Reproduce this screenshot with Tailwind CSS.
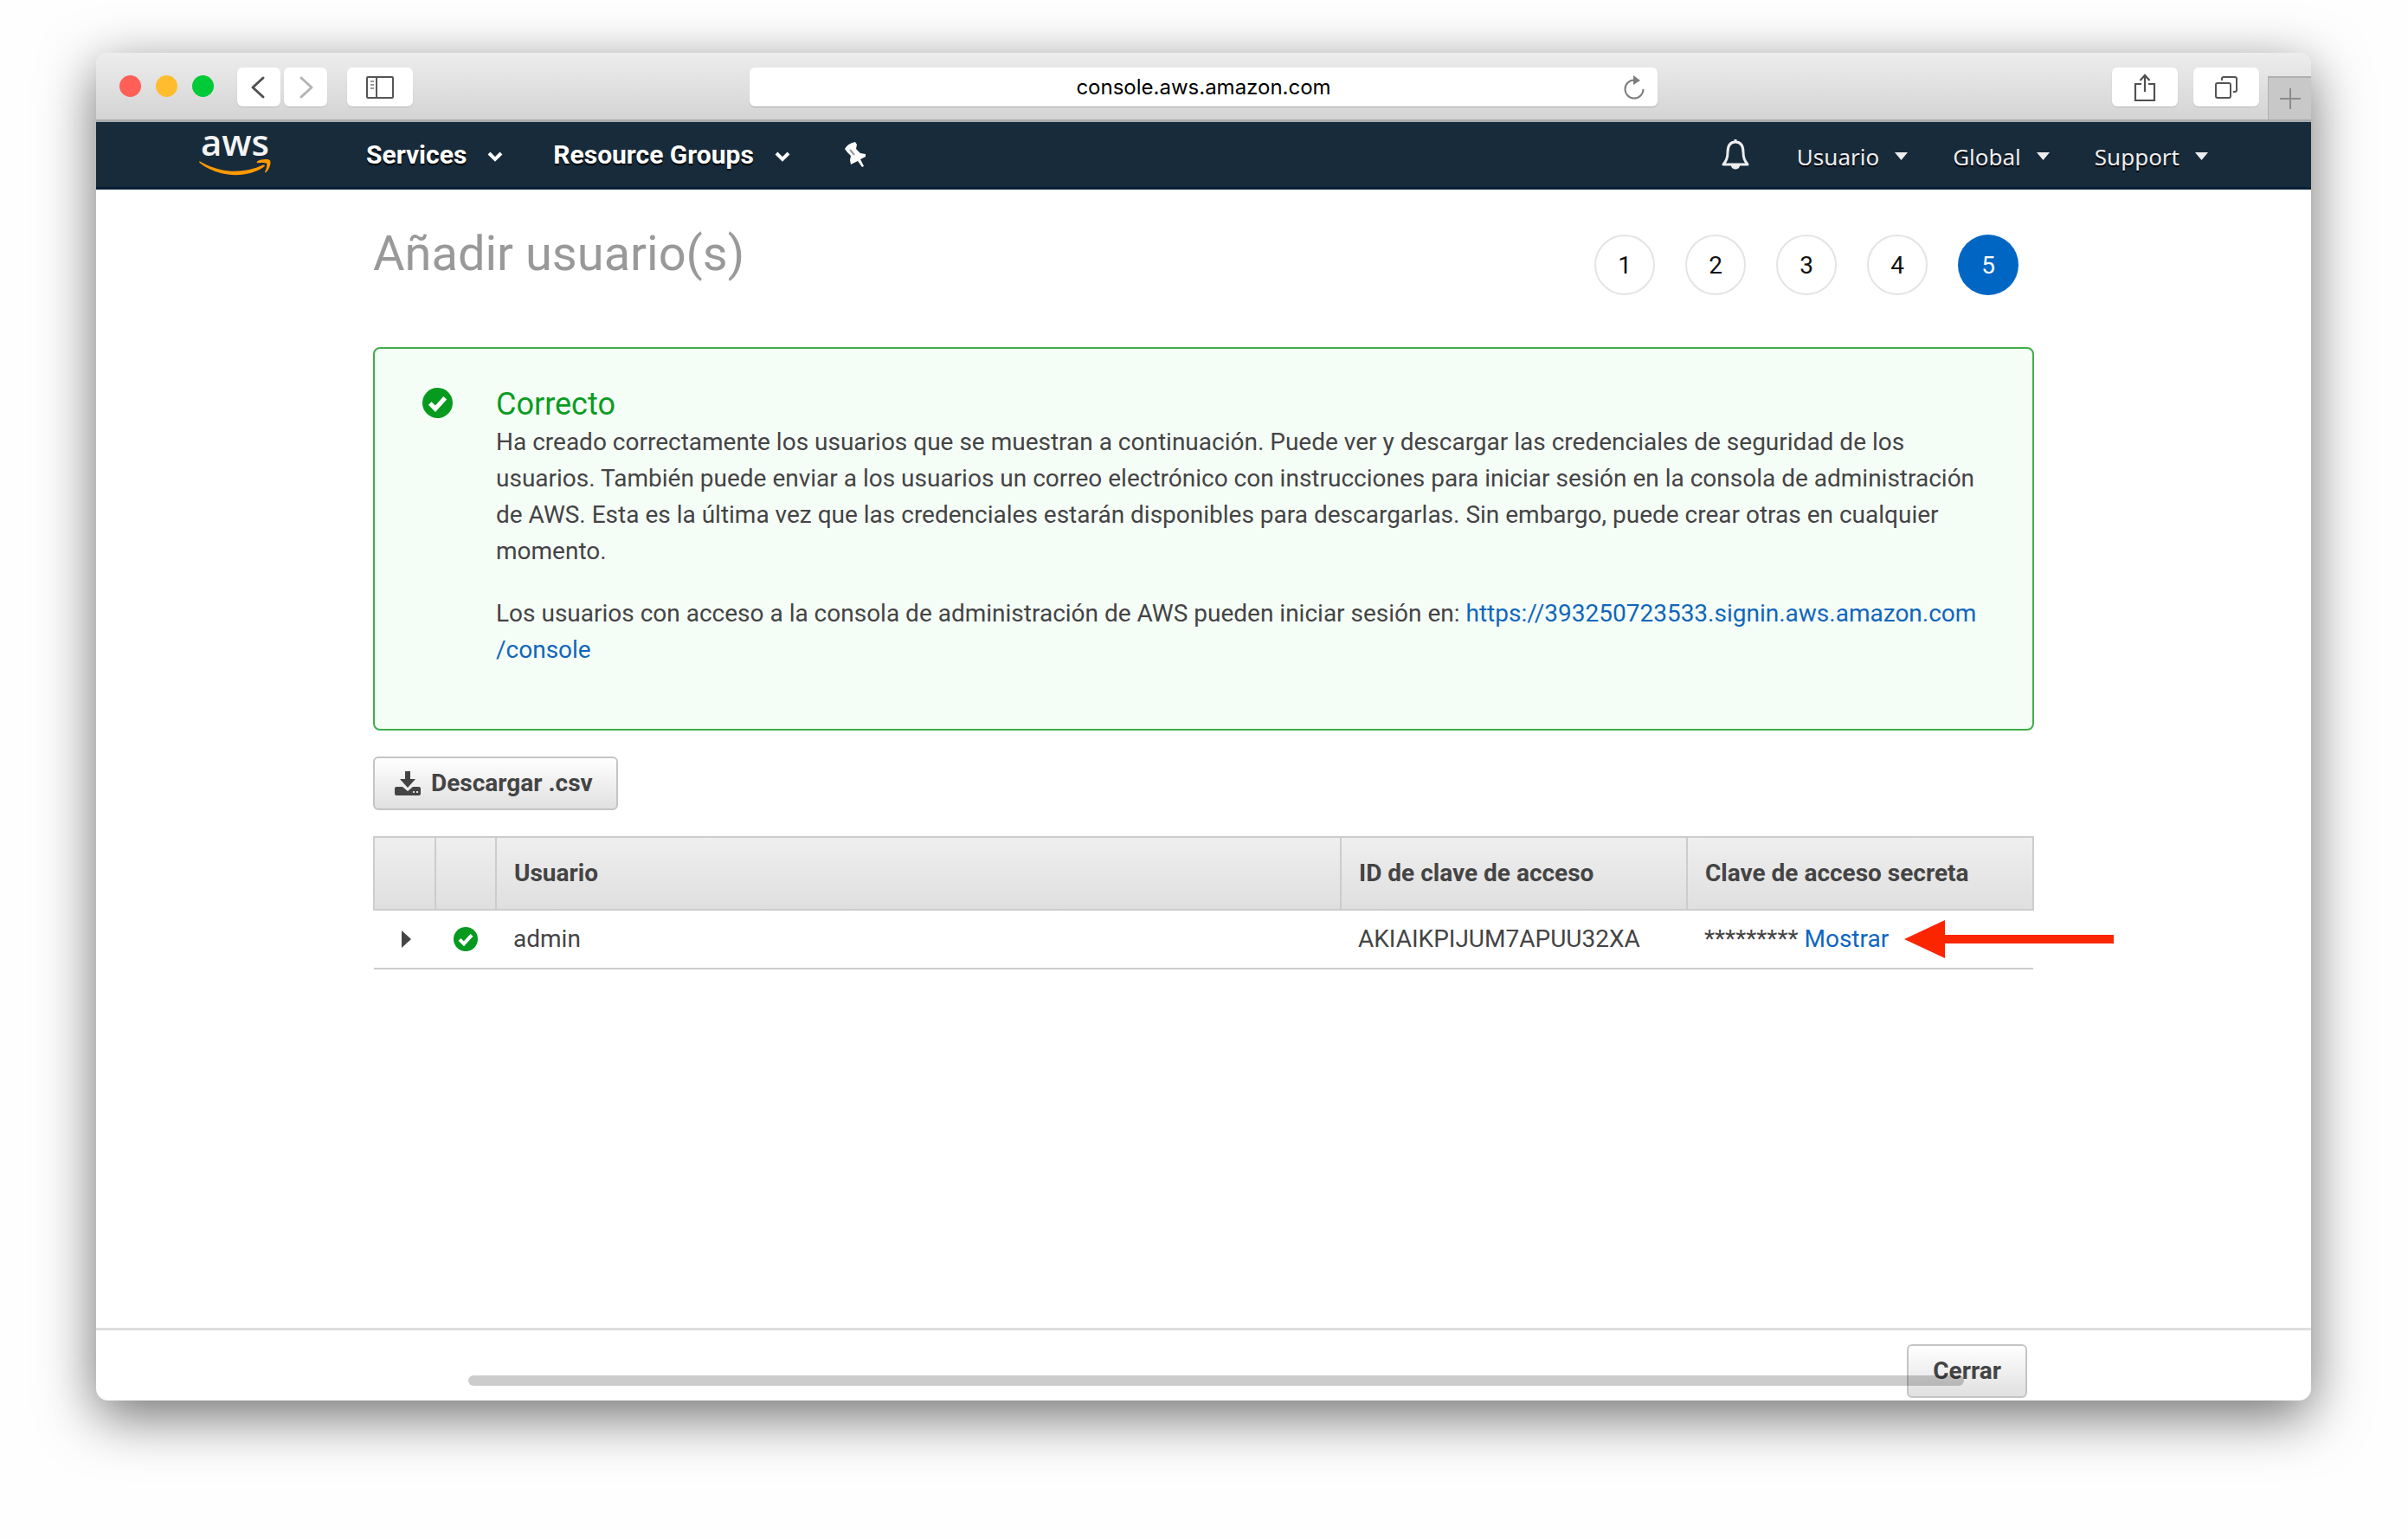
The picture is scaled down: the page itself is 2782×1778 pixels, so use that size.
<!DOCTYPE html>
<html lang="es">
<head>
<meta charset="utf-8">
<title>Añadir usuario(s)</title>
<script src="https://cdn.jsdelivr.net/npm/@tailwindcss/browser@4"></script>
</head>
<body class="flex min-h-screen flex-col bg-[#fefefe] pt-[61px] pr-[112px] pb-[160px] pl-[111px] font-['Roboto',sans-serif] text-[28px] leading-[42px] text-[#444]">
<div class="relative flex flex-1 flex-col overflow-clip rounded-[14px] bg-white shadow-[0_18px_64px_rgba(0,0,0,0.56)]">

  <!-- Browser toolbar -->
  <div class="grid h-20 grid-cols-[1fr_41%_1fr] items-start border-b-3 border-[#a9abad] bg-linear-to-b from-[#ededed] to-[#d4d4d4] pt-[17px]">
    <div class="flex items-start pl-[27px]">
      <div class="flex h-[42px] items-center gap-[17px]">
        <span class="size-[25px] rounded-full bg-[#ff5f57]"></span>
        <span class="size-[25px] rounded-full bg-[#ffbd2e]"></span>
        <span class="size-[25px] rounded-full bg-[#00ca38]"></span>
      </div>
      <div class="ml-[27px] flex gap-1">
        <button type="button" aria-label="Atrás" class="flex h-[45px] w-[50px] items-center justify-center rounded-md bg-white shadow-[0_1px_1px_#bbb]">
          <svg width="20" height="28" viewBox="0 0 20 28" fill="none" stroke="#505050" stroke-width="3" stroke-linecap="round" stroke-linejoin="round"><path d="M15 3 3 14l12 11"/></svg>
        </button>
        <button type="button" aria-label="Adelante" class="flex h-[45px] w-[50px] items-center justify-center rounded-md bg-white shadow-[0_1px_1px_#bbb]">
          <svg width="20" height="28" viewBox="0 0 20 28" fill="none" stroke="#b4b4b4" stroke-width="3" stroke-linecap="round" stroke-linejoin="round"><path d="M5 3l12 11L5 25"/></svg>
        </button>
      </div>
      <button type="button" aria-label="Barra lateral" class="ml-[23px] flex h-[45px] w-[76px] items-center justify-center rounded-md bg-white shadow-[0_1px_1px_#bbb]">
        <svg width="32" height="26" viewBox="0 0 32 26" fill="none" stroke="#555" stroke-width="2"><rect x="1" y="1" width="30" height="24" rx="1"/><path d="M12 1v24"/><path d="M5 6h4M5 10h4M5 14h4" stroke="#999"/></svg>
      </button>
    </div>
    <div class="relative">
      <input type="text" aria-label="Dirección" value="console.aws.amazon.com" class="block h-[45px] w-full rounded-md bg-white text-center font-['Inter',sans-serif] text-[24px] text-black shadow-[0_1px_1px_#aaa]">
      <button type="button" aria-label="Recargar" class="absolute top-2 right-3.5">
        <svg class="block" width="26" height="30" viewBox="0 0 26 30" fill="none" stroke="#7d7d7d" stroke-width="2"><path d="M13 6.500A10.500 10.500 0 1 0 23.500 17"/><path d="M12 1l8 6-8 5z" fill="#7d7d7d" stroke="none"/></svg>
      </button>
    </div>
    <div class="flex h-full items-start justify-end">
      <button type="button" aria-label="Compartir" class="mr-[18px] flex h-[45px] w-[76px] items-center justify-center rounded-md bg-white shadow-[0_1px_1px_#bbb]">
        <svg width="26" height="34" viewBox="0 0 26 34" fill="none" stroke="#505050" stroke-width="2.200"><path d="M9 13H2v19h22V13h-7M13 22V3M7.500 9 13 3l5.500 6"/></svg>
      </button>
      <button type="button" aria-label="Pestañas" class="mr-[10px] flex h-[45px] w-[76px] items-center justify-center rounded-md bg-white shadow-[0_1px_1px_#bbb]">
        <svg width="26" height="26" viewBox="0 0 26 26" fill="none" stroke="#555" stroke-width="2"><rect x="1" y="8" width="17" height="17" rx="2"/><path d="M8 5V3a2 2 0 0 1 2-2h13a2 2 0 0 1 2 2v13a2 2 0 0 1-2 2h-2"/></svg>
      </button>
      <button type="button" aria-label="Nueva pestaña" class="mt-[10px] flex w-[50px] items-center justify-center self-stretch border-t-2 border-l border-[#b0b0b0] bg-[#c8c8c8]">
        <svg width="24" height="24" viewBox="0 0 24 24" stroke="#8c8c8c" stroke-width="2"><path d="M12 0v24M0 12h24"/></svg>
      </button>
    </div>
  </div>

  <!-- Console navigation -->
  <nav class="flex h-[78px] items-center border-b-3 border-[#081f33] bg-[#172b3b] pr-[119px] text-white">
    <a href="#" aria-label="AWS" class="ml-[119px] flex w-[83px] flex-col items-center gap-1.5 pb-1">
      <span class="h-7 font-['Open_Sans',sans-serif] text-[42px] leading-7 font-semibold text-[#f4f4f4]">aws</span>
      <svg class="block" width="83" height="20" viewBox="0 0 83 20" fill="#ff9900"><path d="M1 2.500c24 14 50 14.500 73 4 1.500-.5 2.500 1 1.300 2C56 22.500 22 21.500.500 4 0 3 .300 2 1 2.500z"/><path d="M67 2.500C72-.500 80-.500 82 1.500c1.500 2.500-.500 10-4.500 13.500-1 .8-1.800.3-1.300-.8 1.200-2.700 2.800-7.700 1.800-9.200-1-1.400-7-1-10-.7-1.300.2-1.800-1-1-1.800z"/></svg>
    </a>
    <a href="#" class="ml-[110px] flex items-center gap-6 text-[30px] font-bold text-shadow-[0_2px_1px_#000]">Services
      <svg class="mt-1" width="18" height="12" viewBox="0 0 18 12" fill="none" stroke="#fff" stroke-width="4"><path d="M2 2l7 7 7-7"/></svg></a>
    <a href="#" class="ml-[58px] flex items-center gap-6 text-[30px] font-bold text-shadow-[0_2px_1px_#000]">Resource Groups
      <svg class="mt-1" width="18" height="12" viewBox="0 0 18 12" fill="none" stroke="#fff" stroke-width="4"><path d="M2 2l7 7 7-7"/></svg></a>
    <a href="#" aria-label="Anclar" class="ml-[63px]">
      <svg width="25" height="29" viewBox="0 0 25 29" fill="#fff"><path d="M0 8Q3 2 12 0l2 3-1 5 5 5 6 1v3l-6 3 4 8-2 1-5-7-8 4-1-5 1-5-4-4z"/><path d="M6 9l5 6" stroke="#999" stroke-width="2"/></svg></a>
    <div class="ml-auto flex items-center font-['Noto_Sans',sans-serif] text-[26px] text-[#eee]">
      <a href="#" aria-label="Notificaciones" class="mr-[55px]">
        <svg width="32" height="35" viewBox="0 0 32 35" fill="none" stroke="#eee" stroke-width="3" stroke-linejoin="round"><path d="M16 3C9 3 7 9 7 15c0 7-2 10-5 14h28c-3-4-5-7-5-14 0-6-2-12-9-12z"/><path d="M16 0v3" /><path d="M11 30h10c0 6-10 6-10 0z" fill="#eee" stroke="none"/></svg></a>
      <a href="#" class="mr-[52px] flex items-center gap-[18px] pt-1 text-shadow-[0_2px_1px_#000]">Usuario <svg width="15" height="9" viewBox="0 0 15 9" fill="#eee"><path d="M0 0h15L7.500 9z"/></svg></a>
      <a href="#" class="mr-[52px] flex items-center gap-[18px] pt-1 text-shadow-[0_2px_1px_#000]">Global <svg width="15" height="9" viewBox="0 0 15 9" fill="#eee"><path d="M0 0h15L7.500 9z"/></svg></a>
      <a href="#" class="flex items-center gap-[18px] pt-1 text-shadow-[0_2px_1px_#000]">Support <svg width="15" height="9" viewBox="0 0 15 9" fill="#eee"><path d="M0 0h15L7.500 9z"/></svg></a>
    </div>
  </nav>

  <!-- Wizard content -->
  <main class="flex-1 px-80 pt-10">
    <div class="flex items-start justify-between pr-[18px]">
      <h1 class="text-[56px] leading-[68px] text-[#999]">Añadir usuario(s)</h1>
      <ol class="mt-3 flex gap-[35px] text-[28px] text-[#111]">
        <li class="flex size-[70px] items-center justify-center rounded-full border-2 border-[#e4e4e4] pt-0.5">1</li>
        <li class="flex size-[70px] items-center justify-center rounded-full border-2 border-[#e4e4e4] pt-0.5">2</li>
        <li class="flex size-[70px] items-center justify-center rounded-full border-2 border-[#e4e4e4] pt-0.5">3</li>
        <li class="flex size-[70px] items-center justify-center rounded-full border-2 border-[#e4e4e4] pt-0.5">4</li>
        <li aria-current="step" class="flex size-[70px] items-center justify-center rounded-full bg-[#0066c4] pt-0.5 text-white">5</li>
      </ol>
    </div>

    <section class="mt-[60px] flex gap-[50px] rounded-lg border-2 border-[#3fae49] bg-[#f5fdf7] pt-[41px] pr-[60px] pb-[70px] pl-[55px]">
      <svg class="mt-1 shrink-0" width="35" height="35" viewBox="0 0 34 34"><circle cx="17" cy="17" r="17" fill="#069a1f"/><path d="M8.500 17.500l6 6 11-12" fill="none" stroke="#fff" stroke-width="5"/></svg>
      <div>
        <h2 class="text-[36px] leading-[46px] text-[#0a9c22]">Correcto</h2>
        <p>Ha creado correctamente los usuarios que se muestran a continuación. Puede ver y descargar las credenciales de seguridad de los usuarios. También puede enviar a los usuarios un correo electrónico con instrucciones para iniciar sesión en la consola de administración de AWS. Esta es la última vez que las credenciales estarán disponibles para descargarlas. Sin embargo, puede crear otras en cualquier momento.</p>
        <p class="mt-[30px]">Los usuarios con acceso a la consola de administración de AWS pueden iniciar sesión en: <a href="#" class="text-[#1166bb]">https://393250723533.signin.aws.amazon.com<wbr>/console</a></p>
      </div>
    </section>

    <button type="button" class="mt-[30px] flex h-[62px] items-center gap-3 rounded-md border-2 border-[#c4c4c4] bg-linear-to-b from-white to-[#e0e0e0] pr-[27px] pl-[23px] font-bold text-[#444]">
      <svg width="30" height="28" viewBox="0 0 30 28" fill="#444"><path d="M12 0h6v9h6l-9 10-9-10h6z"/><path d="M2 18h7l6 5 6-5h7a2 2 0 0 1 2 2v6a2 2 0 0 1-2 2H2a2 2 0 0 1-2-2v-6a2 2 0 0 1 2-2z"/><path d="M21 24h2M25 24h2" stroke="#ddd" stroke-width="2"/></svg>
      Descargar .csv</button>

    <table class="mt-[30px] w-full table-fixed border-collapse text-left">
      <colgroup><col class="w-[71px]"><col class="w-[70px]"><col><col class="w-[400px]"><col class="w-[400px]"></colgroup>
      <thead class="bg-linear-to-b from-[#efefef] to-[#dfdfdf] text-[#444]">
        <tr class="h-[84px]">
          <th class="border-2 border-[#ccc]"></th>
          <th class="border-2 border-[#ccc]"></th>
          <th class="border-2 border-[#ccc] px-5 font-bold">Usuario</th>
          <th class="border-2 border-[#ccc] px-5 font-bold">ID de clave de acceso</th>
          <th class="border-2 border-[#ccc] px-5 font-bold">Clave de acceso secreta</th>
        </tr>
      </thead>
      <tbody>
        <tr class="h-[68px] border-b-2 border-[#ccc]">
          <td><button type="button" aria-label="Expandir" class="ml-8 block"><svg class="block" width="11" height="20" viewBox="0 0 11 20" fill="#444"><path d="M0 0l11 10L0 20z"/></svg></button></td>
          <td><svg class="mx-auto block" width="28" height="28" viewBox="0 0 34 34"><circle cx="17" cy="17" r="17" fill="#069a1f"/><path d="M8.500 17.500l6 6 11-12" fill="none" stroke="#fff" stroke-width="5"/></svg></td>
          <td class="px-5">admin</td>
          <td class="px-5">AKIAIKPIJUM7APUU32XA</td>
          <td class="px-5 whitespace-nowrap">********* <a href="#" class="relative text-[#0d66c4]">Mostrar<svg class="absolute top-1/2 left-full ml-[18px] -translate-y-1/2" width="242" height="44" viewBox="0 0 242 44" fill="#fb2500"><path d="M0 22 47 0v17h195v10H47v17z"/></svg></a></td>
        </tr>
      </tbody>
    </table>
  </main>

  <footer class="flex h-[84px] items-start justify-end border-t-3 border-[#dedede] pt-4 pr-[328px]">
    <button type="button" class="h-[62px] rounded-md border-2 border-[#c4c4c4] bg-linear-to-b from-white to-[#e0e0e0] px-7 font-bold text-[#444]">Cerrar</button>
  </footer>

  <!-- Horizontal scrollbar overlay -->
  <div class="absolute right-[401px] bottom-[17px] left-[430px] h-3 rounded-full bg-black/20"></div>
</div>
</body>
</html>
